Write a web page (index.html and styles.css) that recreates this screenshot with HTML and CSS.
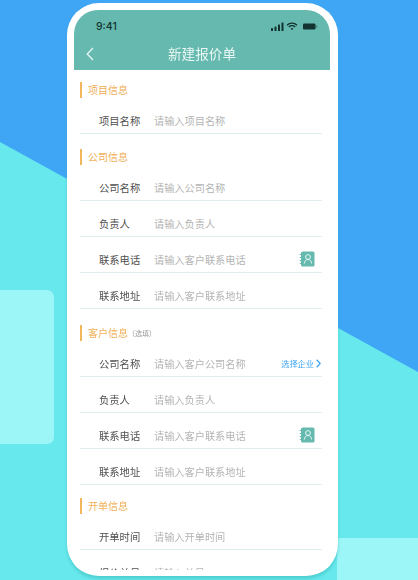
FILE: index.html
```html
<!DOCTYPE html>
<html lang="zh">
<head>
<meta charset="utf-8">
<title>新建报价单</title>
<link rel="stylesheet" href="styles.css">
</head>
<body>
<main class="stage">
  <div class="bg-teal"></div>
  <div class="bg-card-left"></div>
  <div class="bg-card-right"></div>
  <div class="phone">
    <div class="screen">
      <header class="header">
        <div class="status">
          <span class="time">9:41</span>
          <span class="status-icons">
            <svg width="13" height="9" viewBox="0 0 13 9"><rect x="0" y="6" width="2" height="3" rx=".5"/><rect x="3.5" y="4.5" width="2" height="4.5" rx=".5"/><rect x="7" y="2.5" width="2" height="6.5" rx=".5"/><rect x="10.5" y="0.5" width="2" height="8.5" rx=".5"/></svg>
            <svg width="12" height="9" viewBox="0 0 12 9"><path d="M1 3.2a7 7 0 0 1 10 0M2.8 5a4.6 4.6 0 0 1 6.4 0" fill="none" stroke="#12332f" stroke-width="1.3"/><path d="M4.6 6.6a2 2 0 0 1 2.8 0L6 8.2z"/></svg>
            <svg class="battery" width="15" height="7" viewBox="0 0 15 7"><rect x="0" y="0.5" width="12.5" height="6" rx="1.2"/><rect x="13" y="2.3" width="1.4" height="2.4" fill="#4f8c84"/></svg>
          </span>
        </div>
        <div class="nav">
          <svg class="back" width="8" height="14" viewBox="0 0 8 14"><path d="M7 1 1.2 7 7 13" fill="none" stroke="#e8f7f4" stroke-width="1.3"/></svg>
          <h1 class="title">新建报价单</h1>
        </div>
      </header>
      <div class="form">
        <section class="group">
          <h2 class="group-title">项目信息</h2>
          <div class="row"><span class="label">项目名称</span><span class="ph">请输入项目名称</span></div>
        </section>
        <section class="group group-wide">
          <h2 class="group-title">公司信息</h2>
          <div class="row"><span class="label">公司名称</span><span class="ph">请输入公司名称</span></div>
          <div class="row"><span class="label">负责人</span><span class="ph">请输入负责人</span></div>
          <div class="row"><span class="label">联系电话</span><span class="ph">请输入客户联系电话</span>
            <svg class="book" width="16" height="16" viewBox="0 0 16 16"><rect x="2" y="0.5" width="13.5" height="15" rx="1.5" fill="#66b9ae"/><path d="M0.8 3.5h2.4M0.8 6.5h2.4M0.8 9.5h2.4M0.8 12.5h2.4" stroke="#66b9ae" stroke-width="1"/><circle cx="9" cy="6" r="2.4" fill="none" stroke="#e6f6f3" stroke-width="1"/><path d="M5.3 12.5c.5-3 2-4 3.7-4s3.2 1 3.7 4" fill="none" stroke="#e6f6f3" stroke-width="1"/></svg>
          </div>
          <div class="row"><span class="label">联系地址</span><span class="ph">请输入客户联系地址</span></div>
        </section>
        <section class="group group-tight">
          <h2 class="group-title">客户信息<small class="optional">（选填）</small></h2>
          <div class="row"><span class="label">公司名称</span><span class="ph">请输入客户公司名称</span>
            <span class="pick">选择企业<svg width="5" height="9" viewBox="0 0 5 9"><path d="M.7.7 4.2 4.5.7 8.3" fill="none" stroke="#3fa5f5" stroke-width="1.3"/></svg></span>
          </div>
          <div class="row"><span class="label">负责人</span><span class="ph">请输入负责人</span></div>
          <div class="row"><span class="label">联系电话</span><span class="ph">请输入客户联系电话</span>
            <svg class="book" width="16" height="16" viewBox="0 0 16 16"><rect x="2" y="0.5" width="13.5" height="15" rx="1.5" fill="#66b9ae"/><path d="M0.8 3.5h2.4M0.8 6.5h2.4M0.8 9.5h2.4M0.8 12.5h2.4" stroke="#66b9ae" stroke-width="1"/><circle cx="9" cy="6" r="2.4" fill="none" stroke="#e6f6f3" stroke-width="1"/><path d="M5.3 12.5c.5-3 2-4 3.7-4s3.2 1 3.7 4" fill="none" stroke="#e6f6f3" stroke-width="1"/></svg>
          </div>
          <div class="row"><span class="label">联系地址</span><span class="ph">请输入客户联系地址</span></div>
        </section>
        <section class="group">
          <h2 class="group-title">开单信息</h2>
          <div class="row"><span class="label">开单时间</span><span class="ph">请输入开单时间</span></div>
          <div class="row"><span class="label">报价单号</span><span class="ph">请输入单号</span></div>
        </section>
      </div>
    </div>
  </div>
</main>
</body>
</html>
```

FILE: styles.css
```css
* { box-sizing: border-box; }
html, body { margin: 0; padding: 0; }
body {
  width: 418px;
  height: 580px;
  overflow: hidden;
  font-family: "Noto Sans CJK SC", "Liberation Sans", sans-serif;
}
.stage {
  position: relative;
  width: 418px;
  height: 580px;
  padding: 3px 80px 0 67px;
  overflow: hidden;
  background: #3fa5f5;
}
.bg-teal {
  position: absolute;
  inset: 0;
  background: #66e8ec;
  clip-path: polygon(0 142px, 418px 372px, 418px 580px, 0 580px);
}
.bg-card-left {
  position: absolute;
  left: -20px;
  top: 290px;
  width: 74px;
  height: 154px;
  border-radius: 7px;
  background: #9cf5f6;
}
.bg-card-right {
  position: absolute;
  left: 337px;
  top: 538px;
  width: 100px;
  height: 60px;
  background: #9cf5f6;
}
.phone {
  position: relative;
  width: 271px;
  height: 573px;
  padding: 7px 8px 6px 7px;
  background: #fff;
  border-radius: 32px;
  box-shadow: 0 3px 3px rgba(60, 190, 190, .55);
  overflow: hidden;
}
.screen {
  height: 100%;
  display: flex;
  flex-direction: column;
  overflow: hidden;
  border-radius: 24px 24px 0 0;
  filter: blur(.35px);
}
.header {
  flex: none;
  height: 60px;
  background: #66b9ae;
}
.status {
  display: flex;
  align-items: center;
  justify-content: space-between;
  height: 16px;
  margin-top: 8px;
  padding: 0 12px 0 22px;
}
.time {
  font-family: "Inter", "Liberation Sans", sans-serif;
  font-size: 10.5px;
  font-weight: 500;
  color: #12332f;
}
.status-icons {
  display: flex;
  align-items: center;
  gap: 2px;
  fill: #12332f;
}
.battery { margin-left: 3px; }
.nav {
  position: relative;
  display: flex;
  align-items: center;
  justify-content: center;
  height: 30px;
  margin-top: 4px;
}
.back { position: absolute; left: 12px; top: 9px; }
.title {
  margin: 0;
  font-size: 13.6px;
  font-weight: 400;
  color: #e9f8f5;
}
.form {
  flex: 1;
  min-height: 0;
  padding: 12px 8px 0 6px;
  background: #fff;
}
.group { margin-bottom: 15px; }
.group-wide { margin-bottom: 16px; }
.group-tight { margin-bottom: 13px; }
.group-title {
  display: flex;
  align-items: center;
  height: 16px;
  margin: 0;
  padding-left: 6px;
  border-left: 2px solid #f2b65c;
  font-size: 10px;
  line-height: 16px;
  font-weight: 400;
  color: #f0ae55;
}
.optional {
  font-size: 7px;
  color: #9a9a9a;
}
.row {
  display: flex;
  align-items: center;
  height: 36px;
  padding: 9px 0 0 19px;
  border-bottom: 1px solid #dfeeee;
}
.label {
  width: 55px;
  font-size: 10.3px;
  color: #4f4f4f;
}
.ph {
  flex: 1;
  font-size: 10.2px;
  color: #b4b4b4;
}
.book { margin-right: 7px; }
.pick {
  display: flex;
  align-items: center;
  gap: 2px;
  margin-right: 1px;
  font-size: 8.2px;
  color: #3fa5f5;
}
```
